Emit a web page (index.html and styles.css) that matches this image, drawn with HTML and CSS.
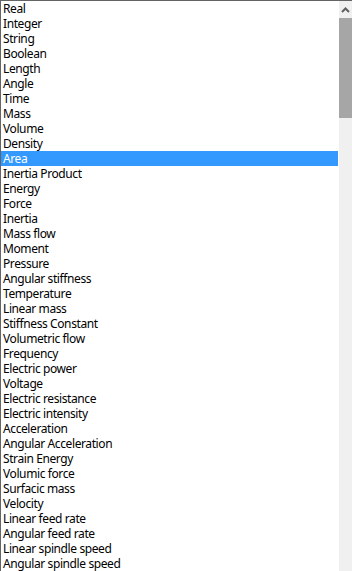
FILE: index.html
```html
<!doctype html>
<html>
<head>
    <meta charset="utf-8">
    <title>Units</title>
    <link rel="stylesheet" href="styles.css">
</head>
<body>
    <div class="listbox">
        <ul class="items">
            <li>Real</li>
            <li>Integer</li>
            <li>String</li>
            <li>Boolean</li>
            <li>Length</li>
            <li>Angle</li>
            <li>Time</li>
            <li>Mass</li>
            <li>Volume</li>
            <li>Density</li>
            <li class="selected">Area</li>
            <li>Inertia Product</li>
            <li>Energy</li>
            <li>Force</li>
            <li>Inertia</li>
            <li>Mass flow</li>
            <li>Moment</li>
            <li>Pressure</li>
            <li>Angular stiffness</li>
            <li>Temperature</li>
            <li>Linear mass</li>
            <li>Stiffness Constant</li>
            <li>Volumetric flow</li>
            <li>Frequency</li>
            <li>Electric power</li>
            <li>Voltage</li>
            <li>Electric resistance</li>
            <li>Electric intensity</li>
            <li>Acceleration</li>
            <li>Angular Acceleration</li>
            <li>Strain Energy</li>
            <li>Volumic force</li>
            <li>Surfacic mass</li>
            <li>Velocity</li>
            <li>Linear feed rate</li>
            <li>Angular feed rate</li>
            <li>Linear spindle speed</li>
            <li>Angular spindle speed</li>
        </ul>
        <div class="scrollbar">
            <div class="arrow">
                <svg width="13" height="17" viewBox="0 0 13 17">
                    <path d="M3 11 L6.5 7.5 L10 11" fill="none" stroke="#606060" stroke-width="2"/>
                </svg>
            </div>
            <div class="thumb"></div>
        </div>
    </div>
</body>
</html>
```

FILE: styles.css
```css
html {
    background: #fff;
}

body {
    margin: 0;
    height: 571px;
    overflow: hidden;
}

.listbox {
    display: flex;
    height: 570px;
    border-top: 1px solid #646464;
    border-left: 1px solid #646464;
    background: #fff;
    font-family: "Noto Sans", "Open Sans", sans-serif;
    font-size: 12px;
    letter-spacing: -0.4px;
    color: #000;
}

.items {
    flex: 1;
    margin: 0 1px 0 0;
    padding: 0;
    list-style: none;
}

.items li {
    height: 15px;
    line-height: 15px;
    padding-left: 2px;
    white-space: nowrap;
}

.items li.selected {
    background: #3399ff;
    color: #fff;
}

.scrollbar {
    width: 13px;
    background: #f0f0f0;
    display: flex;
    flex-direction: column;
}

.arrow {
    height: 17px;
}

.arrow svg {
    display: block;
}

.thumb {
    height: 100px;
    background: #a6a6a6;
}
```
